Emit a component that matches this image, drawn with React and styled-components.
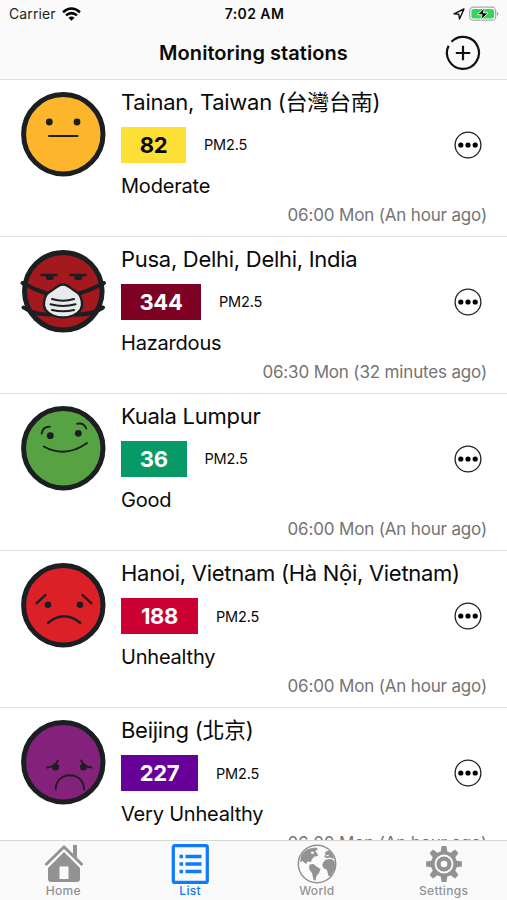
import React from 'react';
import styled, { createGlobalStyle } from 'styled-components';

const Dot = styled.circle`
    fill: #1c1f22;
`;

const Line = styled.path`
    fill: none;
    stroke: #1c1f22;
    stroke-width: ${props => props.strokeWidth || 1.9};
    stroke-linecap: round;
`;

const Mask = styled.path`
    fill: #e9eaec;
    stroke: #1c1f22;
    stroke-width: 2.4;
`;

const stations = [
    { name: 'Tainan, Taiwan (台灣台南)', aqi: 82, level: 'Moderate', time: '06:00 Mon (An hour ago)', face: 'moderate', color: '#fedf35', dark: true, badgeWidth: 65 },
    { name: 'Pusa, Delhi, Delhi, India', aqi: 344, level: 'Hazardous', time: '06:30 Mon (32 minutes ago)', face: 'hazardous', color: '#7e0023', badgeWidth: 80 },
    { name: 'Kuala Lumpur', aqi: 36, level: 'Good', time: '06:00 Mon (An hour ago)', face: 'good', color: '#079a67', badgeWidth: 65.5 },
    { name: 'Hanoi, Vietnam (Hà Nội, Vietnam)', aqi: 188, level: 'Unhealthy', time: '06:00 Mon (An hour ago)', face: 'unhealthy', color: '#cc0033', badgeWidth: 77 },
    { name: 'Beijing (北京)', aqi: 227, level: 'Very Unhealthy', time: '06:00 Mon (An hour ago)', face: 'veryUnhealthy', color: '#660099', badgeWidth: 77 },
];

const faces = {
    moderate: {
        fill: '#fdb52b',
        parts: (
            <>
                <Dot cx="30.3" cy="32" r="3.4" />
                <Dot cx="58" cy="32" r="3.4" />
                <Line d="M30 46H58.5" strokeWidth="2" />
            </>
        ),
    },
    hazardous: {
        fill: '#a4191e',
        radius: 38.8,
        parts: (
            <>
                <Line d="M22.5 28H37.5M51.5 28H66.5" strokeWidth="2.6" />
                <Line d="M29 30.8H32.5M57.5 30.8H61" strokeWidth="4.6" />
                <Line d="M3.5 36Q15 42.5 29 47M85 36Q73 42.5 59 47" strokeWidth="4" />
                <Line d="M4.5 60.5Q14 67.5 31 67.7M84 60.5Q74 67.5 57 67.7" strokeWidth="4" />
                <Mask d="M44 37.5C49 37.5 51.5 41.5 56 44C60.5 46.5 61.5 48.5 62.8 54C64.5 61.5 60 66 54 68.5C47 71.3 41 71.3 34 68.5C28 66 23.5 61.5 25.2 54C26.5 48.5 27.5 46.5 32 44C36.5 41.5 39 37.5 44 37.5Z" />
                <Line d="M33 52Q44 55.5 55 52M31.5 57.2Q44 60.7 56.5 57.2M33 63Q44 65.5 55 63" strokeWidth="2.1" />
            </>
        ),
    },
    good: {
        fill: '#57a344',
        parts: (
            <>
                <Dot cx="31.3" cy="31.7" r="3.4" />
                <Dot cx="59.3" cy="29.3" r="3.4" />
                <Line d="M22.7 29.5Q24 22.5 30.8 22.8M58.2 19.8Q65 18.5 67.2 24.5" />
                <Line d="M24.7 42.5Q46.5 54.5 68 39" />
            </>
        ),
    },
    unhealthy: {
        fill: '#dc2027',
        parts: (
            <>
                <Dot cx="29" cy="43.7" r="3.3" />
                <Dot cx="61" cy="43.7" r="3.3" />
                <Line d="M17.5 42.3L26.5 34M63.5 34L72.5 42.3" strokeWidth="2.3" />
                <Line d="M29 62Q45 48.5 61.5 62" strokeWidth="2.3" />
            </>
        ),
    },
    veryUnhealthy: {
        fill: '#83217b',
        parts: (
            <>
                <Dot cx="36.5" cy="49" r="3.5" />
                <Dot cx="64.5" cy="49" r="3.5" />
                <Line d="M28 49.5Q36.5 48.5 38.8 42.5M72.5 49.5Q64.5 48.5 62.2 42.5" />
                <Line d="M36.7 71.5C36.7 52.5 65 52.5 65 71.5" />
            </>
        ),
    },
};

function Face({ type }) {
    const { fill, radius = 39.7, parts } = faces[type];

    return (
        <FaceIcon viewBox="0 0 88 88">
            <circle cx="44.3" cy="44.2" r={radius} fill={fill} stroke="#1c1f22" strokeWidth="5" />
            {parts}
        </FaceIcon>
    );
}

function Station({ name, aqi, level, time, face, color, dark, badgeWidth }) {
    return (
        <Row>
            <Face type={face} />
            <Info>
                <Name>{name}</Name>
                <Reading>
                    <Badge $color={color} $dark={dark} $width={badgeWidth}>{aqi}</Badge>
                    <Pollutant>PM2.5</Pollutant>
                    <MoreButton aria-label="More">
                        <svg width="28" height="28" viewBox="0 0 28 28">
                            <circle cx="14" cy="14" r="12.9" fill="none" stroke="#222" strokeWidth="1.3" />
                            <circle cx="6.8" cy="14" r="2.6" />
                            <circle cx="14" cy="14" r="2.6" />
                            <circle cx="21.2" cy="14" r="2.6" />
                        </svg>
                    </MoreButton>
                </Reading>
                <Level>{level}</Level>
                <Time>{time}</Time>
            </Info>
        </Row>
    );
}

function HomeIcon() {
    return (
        <TabIcon viewBox="-1 0 40 40">
            <path d="M29 1H33V14L29 10Z" fill="currentColor" />
            <path d="M1.5 21L20 3L38.5 21" fill="none" stroke="currentColor" strokeWidth="2.8" />
            <path fillRule="evenodd" d="M20 8L36 24V35Q36 38 33 38H7Q4 38 4 35V24ZM15.5 22.5V35H24.5V22.5Z" fill="currentColor" />
        </TabIcon>
    );
}

function ListIcon() {
    return (
        <TabIcon viewBox="0 0 40 40">
            <rect x="3.3" y="1.6" width="34" height="36.8" rx="1.5" fill="none" stroke="currentColor" strokeWidth="3.2" />
            <path d="M9.5 12.5H13M15.5 12.5H31.5M9.5 20H13M15.5 20H31.5M9.5 27.5H13M15.5 27.5H31.5" stroke="currentColor" strokeWidth="3.4" />
        </TabIcon>
    );
}

function WorldIcon() {
    return (
        <TabIcon viewBox="0 0 40 40">
            <circle cx="20" cy="20" r="18.7" fill="none" stroke="currentColor" strokeWidth="1.5" />
            <g fill="currentColor">
                <path d="M4 12Q7 6 13 4.5L19 3.5L21 5.5L18 7L20 9L21 12L17.5 12.5L15 15L14 18L10.5 17.5L9 20L5.5 17L3 18Z" />
                <path d="M12.5 20.5L16.5 20L19.5 22.5L23.5 25L22 29L19.5 32L18.5 36.5L16.5 36L15 29L12 25Z" />
                <path d="M26.5 18L29 15.5L34 15L37.5 17L38.3 23L36 28L33.5 32L31.5 32L30 26L26.5 24L25.2 21Z" />
                <path d="M28 8L32 6.5L35.5 10.5L37 15L33 13.5L30 14L27 13L28.5 11Z" />
            </g>
            <path d="M14.5 8L17 8.5L15 10ZM29 12L32 11" fill="#fff" stroke="#fafafa" strokeWidth="1" />
        </TabIcon>
    );
}

function SettingsIcon() {
    return (
        <TabIcon viewBox="0 0 40 40">
            {[0, 45, 90, 135, 180, 225, 270, 315].map(angle => (
                <path key={angle} d="M16.5 9L17.6 2H22.4L23.5 9Z" fill="currentColor" transform={`rotate(${angle} 20 20)`} />
            ))}
            <circle cx="20" cy="20" r="13" fill="currentColor" />
            <circle cx="20" cy="20" r="8.5" fill="none" stroke="#fafafa" strokeWidth="1.8" />
            <circle cx="20" cy="20" r="3.3" fill="#fafafa" />
        </TabIcon>
    );
}

function App() {
    return (
        <Screen>
            <GlobalStyle />
            <Header>
                <StatusBar>
                    <Carrier>
                        Carrier
                        <svg width="19" height="14" viewBox="0 0 19 14" fill="none" stroke="#000" strokeWidth="2.5">
                            <path d="M1 5.2Q9.5 -2.2 18 5.2M4 8.4Q9.5 3.8 15 8.4" />
                            <path d="M6.5 10.8Q9.5 8.3 12.5 10.8L9.5 13.8Z" fill="#000" stroke="none" />
                        </svg>
                    </Carrier>
                    <Clock>7:02 AM</Clock>
                    <StatusIcons>
                        <svg width="12" height="12" viewBox="0 0 12 12" fill="none" stroke="#111" strokeWidth="1.4" strokeLinejoin="round">
                            <path d="M1 5.8L11 1L6.5 11L5.8 6.2Z" />
                        </svg>
                        <svg width="31" height="16" viewBox="0 0 31 16">
                            <rect x="0.7" y="1.2" width="26" height="13" rx="3.8" fill="#fff" stroke="#a9a9a9" strokeWidth="1.2" />
                            <rect x="2.4" y="2.9" width="22.6" height="9.6" rx="2.2" fill="#35d45c" />
                            <path d="M28 5.5Q31 7.8 28 10Z" fill="#a9a9a9" />
                            <path d="M15.5 1.8L8.5 8.7H13L11.8 14L19 6.9H14.4Z" fill="#000" stroke="#fff" strokeWidth="0.9" />
                        </svg>
                    </StatusIcons>
                </StatusBar>
                <TitleBar>
                    <Title>Monitoring stations</Title>
                    <AddButton aria-label="Add station">
                        <svg width="36" height="36" viewBox="0 0 36 36" fill="none" stroke="#111" strokeWidth="2.2">
                            <path d="M6.5 6.7A16 16 0 1 1 3.6 10.8" />
                            <path d="M18 10.8V25.2M10.8 18H25.2" />
                        </svg>
                    </AddButton>
                </TitleBar>
            </Header>
            <List>
                {stations.map(station => (
                    <Station key={station.name} {...station} />
                ))}
            </List>
            <TabBar>
                <Tab><HomeIcon />Home</Tab>
                <Tab $active><ListIcon />List</Tab>
                <Tab><WorldIcon />World</Tab>
                <Tab><SettingsIcon />Settings</Tab>
            </TabBar>
        </Screen>
    );
}

export default App;

const GlobalStyle = createGlobalStyle`
    * {
        box-sizing: border-box;
    }
    body {
        margin: 0;
        background: white;
        color: #0a0a0a;
        font-family: Inter, "Noto Sans CJK TC", sans-serif;
    }
    svg {
        display: block;
        flex-shrink: 0;
    }
    button {
        padding: 0;
        border: none;
        background: none;
    }
`;

const Screen = styled.div`
    width: 507px;
    height: 900px;
    display: flex;
    flex-direction: column;
    overflow: hidden;
`;

const Header = styled.header`
    flex: 0 0 79.5px;
    background: #fafafa;
    border-bottom: 1px solid #e2e2e2;
`;

const StatusBar = styled.div`
    height: 27px;
    padding: 0 7px 0 9px;
    display: grid;
    grid-template-columns: 1fr auto 1fr;
    align-items: center;
    font-size: 14px;
    line-height: 28px;
`;

const Carrier = styled.div`
    display: flex;
    align-items: center;
    gap: 6px;
    color: #222;
    letter-spacing: 0.1px;
`;

const Clock = styled.div`
    font-weight: 600;
    letter-spacing: 0.4px;
`;

const StatusIcons = styled.div`
    display: flex;
    align-items: center;
    justify-content: flex-end;
    gap: 4px;
`;

const TitleBar = styled.div`
    height: 51px;
    padding: 0 26px;
    display: grid;
    grid-template-columns: 1fr auto 1fr;
    align-items: center;
`;

const Title = styled.h1`
    grid-column: 2;
    margin: 0;
    font-size: 20px;
    font-weight: 600;
    letter-spacing: 0.06px;
`;

const AddButton = styled.button`
    justify-self: end;
`;

const List = styled.main`
    flex: 1;
    min-height: 0;
    overflow: hidden;
`;

const Row = styled.section`
    height: 157.2px;
    padding: 10px 20px 0 19px;
    display: flex;
    border-bottom: 1px solid #dedede;
`;

const FaceIcon = styled.svg`
    width: 88px;
    height: 88px;
`;

const Info = styled.div`
    flex: 1;
    margin-left: 14px;
    display: flex;
    flex-direction: column;
`;

const Name = styled.h2`
    height: 37px;
    margin: 0;
    font-size: 22px;
    font-weight: 400;
    line-height: 25px;
    white-space: nowrap;
    letter-spacing: -0.28px;
`;

const Reading = styled.div`
    height: 36px;
    display: flex;
    align-items: center;
`;

const Badge = styled.div`
    width: ${props => props.$width}px;
    height: 36px;
    background: ${props => props.$color};
    color: ${props => (props.$dark ? '#0a0a0a' : 'white')};
    font-size: 22px;
    font-weight: 700;
    line-height: 36px;
    text-align: center;
    letter-spacing: -0.3px;
`;

const Pollutant = styled.div`
    margin-left: 18px;
    font-size: 14.5px;
    letter-spacing: -0.15px;
`;

const MoreButton = styled.button`
    margin: 0 5px 0 auto;
`;

const Level = styled.div`
    margin-top: 9px;
    font-size: 20px;
    line-height: 28px;
    letter-spacing: -0.2px;
`;

const Time = styled.div`
    margin-top: 4px;
    text-align: right;
    font-size: 17px;
    line-height: 22px;
    letter-spacing: -0.16px;
    color: #747474;
`;

const TabBar = styled.nav`
    flex: 0 0 60px;
    display: grid;
    grid-template-columns: repeat(4, 1fr);
    background: #fafafa;
    border-top: 1px solid #d6d6d6;
`;

const Tab = styled.div`
    padding-top: 3px;
    display: flex;
    flex-direction: column;
    align-items: center;
    color: ${props => (props.$active ? '#0f7cf5' : '#929292')};
    font-size: 12px;
    font-weight: 500;
    line-height: 14px;
    letter-spacing: 0.3px;
`;

const TabIcon = styled.svg`
    width: 40px;
    height: 40px;
`;
